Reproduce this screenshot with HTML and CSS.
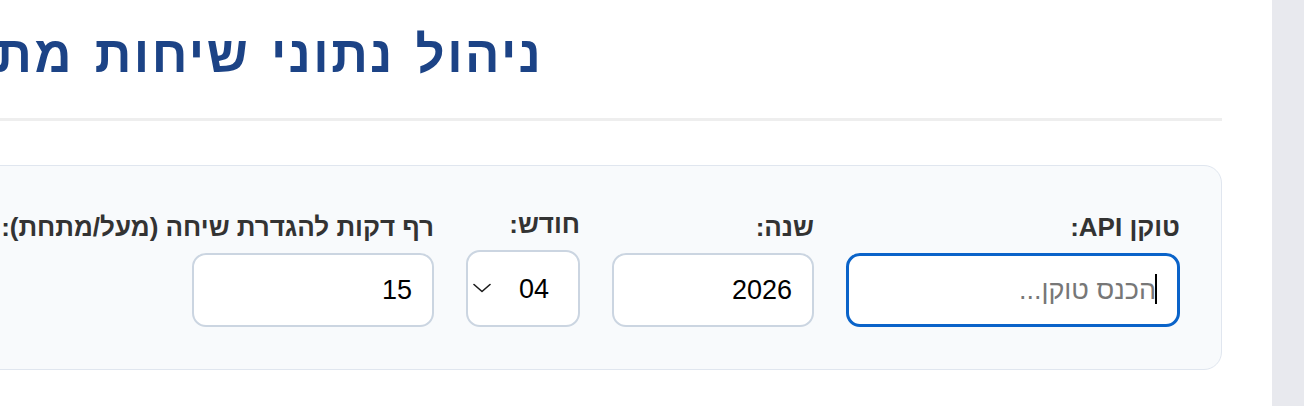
FILE: index.html
```html
<!DOCTYPE html>
<html lang="he" dir="rtl">
<head>
<meta charset="utf-8">
<title>ניהול נתוני שיחות</title>
<link rel="stylesheet" href="styles.css">
</head>
<body class="page">
  <main class="container">
    <header class="header">
      <h1 class="title">ניהול נתוני שיחות מתקדם</h1>
    </header>
    <section class="card">
      <div class="fields">
        <div class="field field-token">
          <label class="label" for="token">טוקן API:</label>
          <div class="control-wrap">
            <input class="input input-focused" id="token" type="text" placeholder="הכנס טוקן...">
            <span class="caret"></span>
          </div>
        </div>
        <div class="field field-year">
          <label class="label" for="year">שנה:</label>
          <input class="input" id="year" type="text" value="2026">
        </div>
        <div class="field field-month">
          <label class="label" for="month">חודש:</label>
          <div class="control-wrap">
            <select class="select" id="month">
              <option>01</option><option>02</option><option>03</option>
              <option selected>04</option><option>05</option><option>06</option>
              <option>07</option><option>08</option><option>09</option>
              <option>10</option><option>11</option><option>12</option>
            </select>
            <svg class="chevron" width="18" height="10" viewBox="0 0 18 10" aria-hidden="true">
              <path d="M1 1.5 L9 8.5 L17 1.5" fill="none" stroke="#1a1a1a" stroke-width="1.6" stroke-linecap="round" stroke-linejoin="round"/>
            </svg>
          </div>
        </div>
        <div class="field field-minutes">
          <label class="label" for="minutes">רף דקות להגדרת שיחה (מעל/מתחת):</label>
          <input class="input input-minutes" id="minutes" type="text" value="15">
        </div>
      </div>
    </section>
  </main>
</body>
</html>
```

FILE: styles.css
```css
html, body {
  margin: 0;
  height: 100%;
  overflow: hidden;
}

.page {
  direction: rtl;
  background: #e8e9ee;
  padding-right: 32px;
  font-family: "Liberation Sans", Arial, sans-serif;
}

.container {
  box-sizing: border-box;
  width: 2110px;
  min-height: 100vh;
  background: #ffffff;
  padding: 27px 50px 40px 50px;
}

.header {
  border-bottom: 3px solid #eeeeee;
  padding-bottom: 35px;
  margin-bottom: 44px;
}

.title {
  margin: 0;
  text-align: center;
  font-size: 51px;
  line-height: 56px;
  letter-spacing: 2.5px;
  word-spacing: 4px;
  font-weight: 700;
  color: #1c4386;
}

.card {
  background: #f8fafc;
  border: 1px solid #e0e6ef;
  border-radius: 18px;
  padding: 43px 41px 42px 41px;
}

.fields {
  display: flex;
  align-items: flex-end;
  gap: 32px;
}

.field {
  display: flex;
  flex-direction: column;
  gap: 11px;
}

.label {
  font-size: 26px;
  line-height: 30px;
  font-weight: 700;
  color: #333333;
  white-space: nowrap;
}

.control-wrap {
  position: relative;
}

.input {
  box-sizing: border-box;
  height: 74px;
  border: 2px solid #cbd5e1;
  border-radius: 14px;
  background: #ffffff;
  padding: 0 20px;
  font-family: "Liberation Sans", Arial, sans-serif;
  font-size: 27px;
  color: #000000;
  direction: rtl;
  text-align: right;
  outline: none;
}

.input::placeholder {
  color: #777777;
}

.input-focused {
  border: 3px solid #0a63c9;
  padding: 0 21px 0 19px;
}

.field-token .input { width: 334px; }
.field-year .input { width: 202px; }
.input-minutes { width: 242px; }

.caret {
  position: absolute;
  right: 23px;
  top: 21px;
  width: 2px;
  height: 30px;
  background: #000000;
}

.select {
  box-sizing: border-box;
  width: 114px;
  height: 77px;
  border: 2px solid #cbd5e1;
  border-radius: 14px;
  background: #ffffff;
  padding: 0 29px 0 40px;
  font-family: "Liberation Sans", Arial, sans-serif;
  font-size: 27px;
  color: #000000;
  appearance: none;
  -webkit-appearance: none;
  direction: rtl;
  text-align: right;
  outline: none;
}

.chevron {
  position: absolute;
  left: 7px;
  top: 33px;
  pointer-events: none;
}
```
